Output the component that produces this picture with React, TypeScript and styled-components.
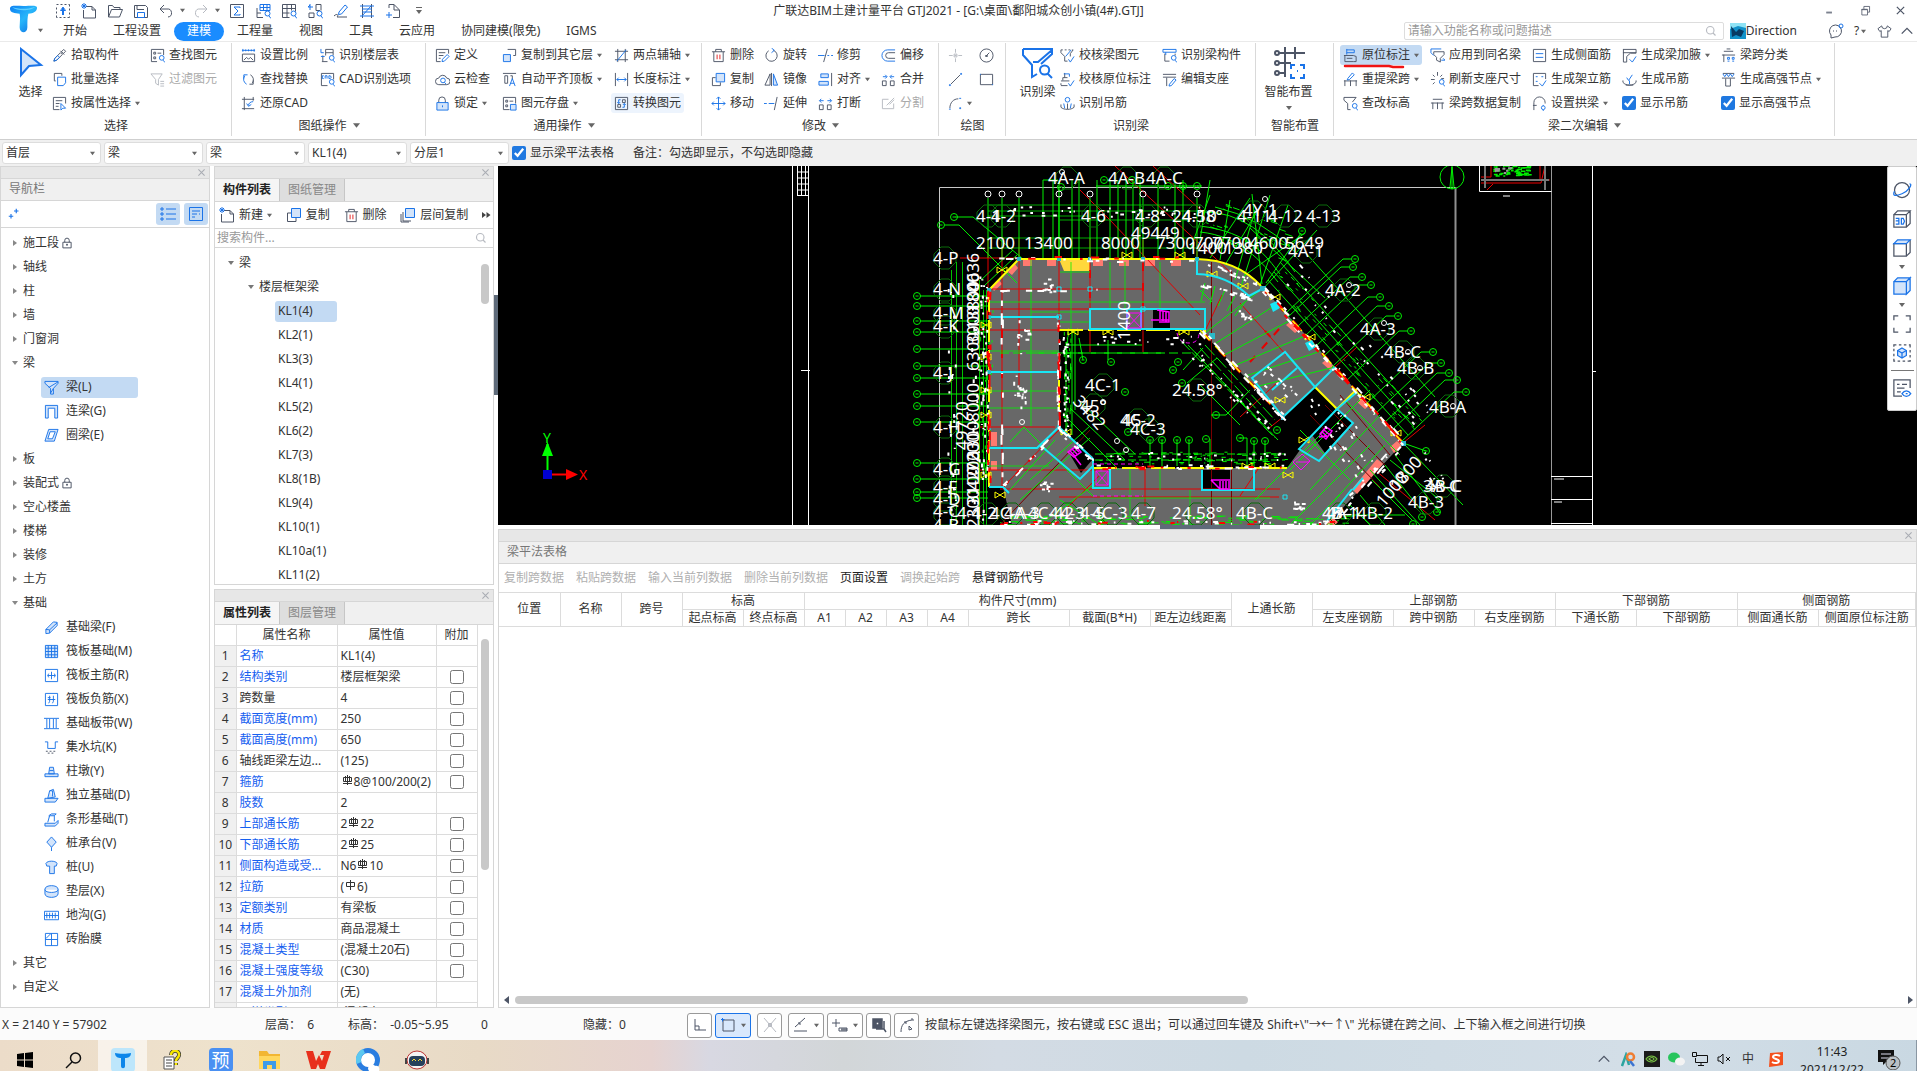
import React from "react";
import styled, { createGlobalStyle, css } from "styled-components";

const FONT = `"Noto Sans", "Noto Sans CJK SC", sans-serif`;
const INK = "#4d5566";
const BLUE = "#1a73e8";
const PALE = "#d3e4fa";
const LINE = "#d6d6d6";

const Global = createGlobalStyle`
  *, *::before, *::after { box-sizing: border-box; }
  body { margin: 0; overflow: hidden; background: #fff; }
  body, button, input, select, table {
    font-family: ${FONT};
    font-size: 12px;
    line-height: 16px;
    color: #333;
  }
  button { border: 0; padding: 0; margin: 0; background: none; white-space: nowrap; }
  svg { display: block; flex: none; }
`;

/* ---------- icons ---------- */

type Glyph = { g?: string; b?: string; f?: string; r?: string };

const MAG = "M10 10.5a2.5 2.5 0 1 0 5 0a2.5 2.5 0 1 0-5 0M14 13l2 2.5";

const glyphs: Record<string, Glyph> = {
  upload: { g: "M1.500 1.500h2m2 0h2m2 0h2m2 0h1v2m0 2v2m0 2v2m0 2v1h-2m-2 0h-2m-2 0h-2m-2 0h-1v-2m0-2v-2m0-2v-2", b: "M8 12V5M5.500 7.500L8 4l2.500 3.500zM7.500 5v7M8.500 5v7" },
  newdoc: { g: "M5 3.500h6l3.500 3.500v8h-12v-8M11 3.500v3.500h3.500", b: "M1 1l4 4M5 1L1 5M3 0v6M0 3h6" },
  open: { g: "M1.500 14V2.500h4l1.500 2h6v2M1.500 14l3-7.500h11l-3 7.500z" },
  save: { g: "M1.500 2.500h11l2 2v10h-13zM4 2.500v4h7", b: "M4.500 9.500h7v5h-7z" },
  undo: { g: "M6 2L2 6l4 4M2 6h7a4 4 0 0 1 1 8" },
  redo: { g: "M10 2l4 4-4 4M14 6H7a4 4 0 0 0-1 8" },
  sum: { g: "M1.500 1.500h13v13h-13z", b: "M11 5V4H5l4 4-4 4h6v-1" },
  calc: { g: "M2 5v9.500h6M2 10h4", b: "M5 1.500h10v6H5zM5 4.500h10M8.500 1.500v6M12 1.500v6" + MAG },
  tablefind: { g: "M1.500 1.500h13v7M1.500 1.500v13h7M1.500 5.500h13M1.500 10h7M6 1.500v13M10.500 1.500v6", b: MAG },
  swapfind: { g: "M9 1.500h5v6M2 10h5v4.500H2zM9 1.500v6h4", b: "M1 4h5M3 1v6M1 4l2-2" + MAG },
  sketch: { g: "M1 13c3-3 5-1 3 1h10", b: "M6 9l6-7 2.500 2-6 7-3 .5z" },
  ladder: { g: "M3.500 1v14M12.500 1v14", b: "M1 3h14M3 6h10M3 9h10M1 13h14M3 13l9-10" },
  addpage: { g: "M4 5V1.500h5L14.500 7v7.500H8M9 1.500V7h5", b: "M4 9v6M1 12h6" },
  dropper: { g: "M2 14l1-3 6-6 2 2-6 6zM9 3l4 4M10 4l2.500-2.500 2 2L12 6z", b: "M2 14l1-3 3-3 2 2-3 3z" },
  batch: { g: "M4 9.500H2.500v-8h8V4", b: "M6 5.500h8.500v6L12 14.500H6z" },
  props: { g: "M8 14.500H1.500v-13h13V8M4 5h7M4 8h4M4 11h3", b: "M9.500 8v7l2-2h3z" },
  findel: { g: "M1.500 1.500h13v6M1.500 1.500v13h6M4 4.500h2v2H4zM8 5.500h4M4 9.500h2v2H4z", b: MAG },
  filter: { g: "M1 2h12L9 8v6l-3-2V8zM11 10h4M11 12.500h4M11 15h4" },
  scale: { g: "M1.500 6.500h13v8h-13zM3 13l3-3 2 2 2-2 3 3", b: "M1 2.500h14M2 1v3M14 1v3M5 1.500v2M8 1.500v2M11 1.500v2" },
  floorfind: { g: "M6 8V1.500h8V8M2 14.500h6M3 8v6M6 5h8", b: "M1 1v4h3M1 9h4" + MAG },
  replace: { g: "M10 3a6 6 0 0 1 2 9M13 9v4h-4", b: "M6 13a6 6 0 0 1-2-9M3 7V3h4" },
  cadopt: { g: "M1.500 14.500v-13h13V8M1.500 14.500H8", b: "M4 4H2.500v3H4M5.500 7V4h2v3M9.500 4v3h1.500l1-1.500L11 4z" + MAG },
  restore: { g: "M3.500 1v14M1 3.500h13M13 1v4M1 13.500h13", b: "M13 6c-3 0-5 2-5 4M6 8l2 3 3-2" },
  define: { g: "M6 14.500H1.500v-13h13V6M4 5h7M4 8h5M4 11h2", b: "M8 12l5-5 2 2-5 5-2.500.5z" },
  cloud: { g: "M4 13.500a3.500 3.500 0 0 1 0-7 4.500 4.500 0 0 1 8.500 0 3.500 3.500 0 0 1 0 7z", b: "M6 9a2.500 2.500 0 1 0 5 0a2.500 2.500 0 1 0-5 0M10 11l2 2" },
  lock: { g: "M4 7V4.500a3.500 3.500 0 0 1 7 0V7", f: "M2 7h12v8H2z", b: "M8 10v2" },
  copyfloor: { g: "M6 1.500h8.500V8H12", f: "M1.500 7h7.500v7.500H1.500z" },
  aligntop: { g: "M1 1.500h14M3 4v8h3V4zM9 4h2v4", b: "M8 15l3-8 3 8M9 12h4" },
  store: { g: "M1.500 1.500h13V8M1.500 1.500v13H8M4 4.500h2v2H4zM8 5.500h4M4 9.500h2v2H4z", f: "M9 9h6v6H9z" },
  axis2: { g: "M4 1v14M12 1v14M1 3.500h14M1 12.500h14", b: "M3 14L13 2" },
  length: { g: "M1.500 1v14M14.500 1v14", b: "M3 8h10M5 6L3 8l2 2M11 6l2 2-2 2" },
  convert: { g: "M1.500 1.500h13v13h-13zM9 4h3v3H9zM4 9h3v3H4z", b: "M7 4H5v4M9 12h2V8M3.500 6.500L5 8l1.500-1.500M9.500 9.500L11 8l1.500 1.500" },
  trash: { g: "M1 4h14M5 4V1.500h6V4M3 4v10.500h10V4", r: "M6.500 7v5M9.500 7v5" },
  rotate: { g: "M10 2.500a6 6 0 1 1-5 0.500", b: "M8 0l3 2.500L8 5" },
  trim: { g: "M10 1L6 15", b: "M0 8h7M10 8h2M14 8h2" },
  offset: { g: "M15 5H8a3 3 0 0 0 0 6h7", b: "M15 2H7a6 6 0 0 0 0 12h8" },
  copy: { g: "M5 6H1.500v8.500H10V11", f: "M5.500 1.500h9v9h-9z" },
  mirror: { g: "M8 1v14M6.500 2L1 14h5.500z", f: "M10 2l4.500 12H10z" },
  align: { g: "M14.500 1v14", f: "M3 2h8v4H3zM1 10h10v4H1z" },
  merge: { g: "M1.500 9.500h4v5h-4zM10 9.500h4v5h-4z", b: "M2 5h4M4.500 3L6.500 5l-2 2M14 5h-4M11.500 3l-2 2 2 2" },
  move: { b: "M8 1v14M1 8h14M6 3l2-2 2 2M6 13l2 2 2-2M3 6L1 8l2 2M13 6l2 2-2 2" },
  extend: { g: "M14 1l-3 14", b: "M0 8h3M5 8h6" },
  breakup: { g: "M1.500 9.500h4v5h-4zM10 9.500h4v5h-4z", b: "M6 5H2M3.500 3l-2 2 2 2M10 5h4M12.500 3l2 2-2 2" },
  split: { g: "M8 3.500H1.500v10h12V8M6 10l8-8M9 9l5-5" },
  point: { g: "M8 1v4M8 11v4M1 8h4M11 8h4M6.500 6.500h3v3h-3zM7 8h2" },
  circle: { g: "M1 8a7 7 0 1 0 14 0a7 7 0 1 0-14 0M8 8l3-3M7 8h2v1H7z" },
  line: { g: "M3 13L13 3", b: "M1 14h2M2 13v2M13 2h2M14 1v2" },
  rect: { g: "M1.500 2.500h13v11h-13z", b: "M1 2.500h1M14 13.500h1" },
  arc: { g: "M2 13C2 7 6 3 11 3", b: "M1 14h2M12 2.500h2M12 13h2M13 12v2" },
  beamfind: { b: "M1 1h14.500v2.500L10 8.500M1 1v3L5.500 9v6L8 13.500M15.500 1.500L8.500 7.500H6M9.500 11.500a2.300 2.300 0 1 0 4.600 0a2.300 2.300 0 1 0-4.600 0M13.500 13.500l2 2" },
  checkbeam: { g: "M1 2h2m2 0h2m2 0h2m2 0h1l-3 4v3M1 2v3l4 4v5h3", b: "M6 9l6-7M9 12l2 3 4-6" },
  checkpos: { g: "M1 9.500h9M3 9V6h5M1 14.500h7M1 12v2M5 1v5", b: "M4 2h6v3M9 12l2 3 4-6" },
  hookfind: { g: "M1 9v3c3 3 11 3 14 0V9M8 8v6", b: "M5.500 4a2.500 2.500 0 1 0 5 0a2.500 2.500 0 1 0-5 0M4 8l1 5M12 8l-1 5" },
  membfind: { g: "M3 6v8h5M14 6v2", b: "M1 1.500h14v3H1zM4 4.500v3" + MAG },
  editseat: { g: "M1 2.500h14M1 5.500h14M5 6v9", b: "M8 13l5-6 2 1.500-5 6-2.500.5z" },
  smart: { g: "M3 3h13M3 8h6M3 13h3M6 0v15M11 0v6M1 3a1 1 0 1 0 2 0a1 1 0 1 0-2 0M1 8a1 1 0 1 0 2 0a1 1 0 1 0-2 0M1 13a1 1 0 1 0 2 0a1 1 0 1 0-2 0", b: "M9 11V9h2M13.500 9H15.500v2M15.500 13.500v2h-2M11 15.500H9v-2M12 12h.5" },
  inplace: { g: "M1 8h10M2 8v6.500h9l3 0V9l-3-1M4 11h6", b: "M4 1v6M4 2h8v3H4" },
  applybeam: { g: "M4 4h11v3l-4 4v4l-4-2v-3L4 7z", b: "M1 1h11M1 1v4l3 3M12 13h4M14 11l2 2" },
  sideb: { g: "M1.500 1.500h13v13h-13z", b: "M4 6h8M4 10h8" },
  haunch: { g: "M1 1.500h14v4h-6L5 9v6H1.500V1.500M1 5h14", b: "M8 12l3 3 4-6" },
  classify: { g: "M3 3.500h10M1 7.500h14M3 7v8M6 1h4", b: "M7 10h2v2H7zM12 10h2v2h-2zM7 14h2M12 14h2" },
  respan: { g: "M1 9.500h14M2 9v6M8 9v6M14 9v6", b: "M5 7l5-6 2 2-5 5-2.500.5z" },
  refresh: { g: "M8 0v4M1 8h4M3 3l2 2M13 3l-2 2M3 13l2-2M12 7h3", b: MAG },
  erect: { g: "M1.500 1.500h13v6M1.500 1.500v13H7", b: "M4 5h2M10 5h2M4 10h2M8 12l3 3 4-6" },
  hook: { g: "M1 9v2c3 4 11 4 14 0V9M4 14h8", b: "M5 6l2 3 4-6M8 9v4" },
  node: { g: "M1 6.500h14M5 7v8h5V7M2 1.500h12", b: "M2 2l2 3 2-3 2 3 2-3 2 3 2-3" },
  level: { g: "M1 1.500h13l-4 5M1 1.500v3L5 8v6.500h3", b: MAG },
  spancopy: { g: "M3 3.500h10M1 7.500h14M3 7v7M8 7v7M13 7v7" },
  arch: { g: "M2 15V7a6 6 0 0 1 12 0v1M1 10h4", b: "M10 12.500a2 2 0 1 0 4 0a2 2 0 1 0-4 0M12 9.500v1M12 15v1" },
  list: { b: "M1 2h2v2H1zM1 7h2v2H1zM1 12h2v2H1zM6 3h10M6 8h10M6 13h10" },
  card: { b: "M1.500 1.500h13v13h-13zM4 5h8M4 8h5M4 11h3M11 8h1" },
  plus: { b: "M11 1v6M8 4h6M4 8v6M1 11h6" },
  search: { g: "M2 7a5 5 0 1 0 10 0a5 5 0 1 0-10 0M11 11l3 3" },
  layers: { g: "M3 5v9h8M1 7v8h8", f: "M5.500 1.500h9v9h-9z" },
  beam: { f: "M1 1.500h14v2L10 9v6l-3 0V9L1 3.500z", b: "M5 8L15 2M7 14l3-5" },
  lintel: { f: "M1.500 15V1.500h13V15h-3V4.500h-7V15z" },
  ring: { f: "M5 1.500h10L11 14H1zM6.500 4h5.500L9 11.500H4z" },
  strip: { f: "M2 10L10 2l4 .5V6l-8 8-4 .5z", b: "M2 10l4 .5V14M6 10.500L14 3" },
  raft: { f: "M1.500 1.500h13v13h-13z", b: "M1.500 4.500h13M1.500 8h13M1.500 11.500h13M4.500 1.500v13M8 1.500v13M11.500 1.500v13" },
  mainbar: { b: "M1.500 1.500h13v13h-13zM4 8h8M8 4v8M5 6l-1 2 1 2M11 6l1 2-1 2" },
  negbar: { b: "M1.500 1.500h13v13h-13zM4 8h8M6 4v6l-1 2M10 4v6l-1 2M4 6h3" },
  band: { b: "M0 2.500h16M0 13.500h16M3 3v10M6 3v10M10 3v10M13 3v10" },
  sump: { b: "M1 2h3v7h8V2h3", g: "M2 12h2M6 12h2M10 12h2M4 14h2M8 14h2" },
  pier: { f: "M1 10.500h14v3H1zM5 10.500l1-7h4l1 7zM6 7h4" },
  iso: { f: "M1 11h14l-3 4H1zM4 11l2-8 4-1.500 2 8zM6 3h3v6" },
  isostrip: { f: "M1 12h11l3-3v3l-3 3H1zM4 11l2-7h5l2-2H8L5 4M11 4v6" },
  cap: { f: "M8 1l5 5.500L8 12 3 6.500z", b: "M8 12v4" },
  pile: { f: "M2 3.500c2-3 10-3 12 0l-1 3h-2v8H6v-8H3z" },
  cushion: { f: "M1 5.500c0-5 14-5 14 0v5c0 5-14 5-14 0zM1 6c0 4 14 4 14 0" },
  trench: { b: "M.5 3.500h15v9H.5zM3 5v6M6 5v6M9 5v6M12 5v6M1 8h14" },
  mold: { b: "M1.500 1.500h13v13h-13zM8 1.500v13M1.500 8h13M2 7l5-5" },
  orbit: { g: "M2 8a6 6 0 1 0 12 0a6 6 0 1 0-12 0", b: "M14 3c3 0-1 6-6 8s-8 2-6-2" },
  cube3: { g: "M1.500 4.500h10v10h-10zM1.500 4.500l3-3h10l-3 3M14.500 1.500v10l-3 3", b: "M3 7.500h2.500v4.500H3M3 9.500h2.500M7.500 7.500v4.500h1.500l1-2.200-1-2.300z" },
  cubetop: { g: "M1.500 4.500h10v10h-10zM14.500 1.500v10l-3 3", f: "M1.500 4.500l3-3h10l-3 3z" },
  cube: { f: "M1.500 4.500h10v10h-10zM1.500 4.500l3-3h10l-3 3M14.500 1.500v10l-3 3v-10z" },
  fit: { g: "M1.500 5V1.500H5M11 1.500h3.500V5M14.500 11v3.500H11M5 14.500H1.500V11" },
  isolate: { g: "M1.500 3v-1.500h2m2 0h2m2 0h2m2 0h1v2m0 2v2m0 2v2m0 2v1h-2m-2 0h-2m-2 0h-2m-2 0h-1v-2m0-2v-2m0-2v-2", f: "M8 4l3.500 2v4L8 12l-3.500-2V6z", b: "M4.500 6L8 8l3.500-2M8 8v4" },
  visible: { g: "M8 14.500H1.500v-13h13V8M4 5h2M8 5h4M4 8h6M4 11h3", b: "M8 12.500c2-3 5-3 7 0-2 3-5 3-7 0zM11 12.500h1.500" },
  ortho: { g: "M3 2v11h11M3 9h4v4" },
  snapbox: { g: "M3 3h11v11H3z", b: "M1 2.500h3.500M2.500 1v3.500" },
  cross: { g: "M2 1l12 14M14 1L2 15M6.500 6.500h3v3h-3z" },
  angle: { g: "M1 14h13M2 10L12 1M5 6h2v2" },
  plusminus: { g: "M4 2v8M0 6h8M7 11h8v3H7zM9 12h6M9 13h6" },
  window: { g: "M2 2h9v9H2zM3 3h7v7H3zM4 4h5v5H4zM5 5h3v3H5zM13 4v8H5M13 12l2 3" },
  polyarc: { g: "M2 15C2 8 5 4 13 3M5 5h2v2M12 2h2v2M10 9v4l3-1z" },
  chat: { g: "M3 12a6 6 0 1 1 4 2l-4 1zM5 8h1M8 8h1", b: "M11 3a2 2 0 1 0 4 0a2 2 0 1 0-4 0" },
  shirt: { g: "M5 2L1 5l2 3 1.500-1V14h7V7l1.500 1 2-3-4-3a3 3 0 0 1-6 0z" },
  up: { g: "M2 11l6-6 6 6" },
  min: { g: "M4 11h7M4 10h7" },
  rest: { g: "M3.500 6.500h7v7h-7zM6 6V3h7v7h-2M3 7h7" },
  x: { g: "M3.500 3.500l9 9M12.500 3.500l-9 9" },
  pointer: { f: "M3 1l10 8-6 .5-4 4.500z" },
  nlock: { g: "M5 7V4.500a3 3 0 0 1 6 0V7M2.500 7h11v7.500h-11zM8 9v3M7 10h2" },
};

const Icon = ({ n, s = 16, dim, w = 1 }: { n: string; s?: number; dim?: boolean; w?: number }) => {
  const p = glyphs[n];
  return (
    <svg width={s} height={s} viewBox="0 0 16 16" fill="none" strokeWidth={w} opacity={dim ? 0.4 : 1} aria-hidden>
      {p.g && <path d={p.g} stroke={INK} />}
      {p.f && <path d={p.f} stroke={BLUE} fill={PALE} fillRule="evenodd" />}
      {p.b && <path d={p.b} stroke={BLUE} />}
      {p.r && <path d={p.r} stroke="#e02020" />}
    </svg>
  );
};

const Caret = ({ s = 6, side, color = "#666" }: { s?: number; side?: boolean; color?: string }) => (
  <svg width={s} height={s} viewBox="0 0 6 6" aria-hidden>
    <path d={side ? "M1 0l4 3-4 3z" : "M0 1h6L3 5z"} fill={color} />
  </svg>
);

const LogoT = ({ s }: { s: number }) => (
  <svg width={s} height={s} viewBox="0 0 30 30" aria-hidden>
    <defs>
      <linearGradient id="tg" x1="0" y1="0" x2="1" y2="1">
        <stop offset="0" stopColor="#0d7ff2" />
        <stop offset=".5" stopColor="#27b6fa" />
        <stop offset="1" stopColor="#0a66e0" />
      </linearGradient>
    </defs>
    <path d="M1 5c0-4 5-3 14-3s14-1 14 2c0 4-4 6-9 6-1 4-1 8-1 14 0 7-8 7-8 0 0-5 1-9 0-14-5 0-10-1-10-5z" fill="url(#tg)" />
    <path d="M3 3c6 2 14 3 24 0-4 4-18 5-24 0z" fill="#5fd0ff" />
  </svg>
);

/* ---------- header ---------- */

const Page = styled.div`
  display: flex;
  flex-direction: column;
  height: 100vh;
  background: #fff;
`;

const Header = styled.header`
  display: grid;
  grid-template: 21px 20px / 50px minmax(0, 1fr);
  border-bottom: 1px solid #eaeaea;
`;

const LogoCell = styled.div`
  grid-area: 1 / 1 / 3 / 2;
  display: flex;
  align-items: flex-end;
  padding: 4px 2px 8px 9px;
`;

const TitleRow = styled.div`
  grid-area: 1 / 1 / 2 / 3;
  display: grid;
  grid-template-columns: 1fr auto 1fr;
  align-items: center;
`;

const QuickBar = styled.div`
  display: flex;
  align-items: center;
  padding-left: 50px;
`;

const QuickButton = styled.button<{ $wide?: boolean }>`
  display: flex;
  align-items: center;
  justify-content: center;
  gap: 6px;
  width: ${(p) => (p.$wide ? 35 : 26)}px;
`;

const Title = styled.h1`
  margin: 0;
  font-size: 12px;
  font-weight: 400;
  line-height: 20px;
`;

const WindowButtons = styled.div`
  display: flex;
  justify-content: flex-end;
`;

const IconButton = styled.button<{ $w: number }>`
  display: flex;
  align-items: center;
  justify-content: center;
  gap: 2px;
  width: ${(p) => p.$w}px;
  height: 20px;
`;

const TabRow = styled.div`
  grid-area: 2 / 2 / 3 / 3;
  display: flex;
  align-items: center;
`;

const Tab = styled.button<{ $on?: boolean }>`
  height: 19px;
  padding: 0 13px;
  border-radius: 10px;
  ${(p) => p.$on && css`background: #1a8cff; color: #fff;`}
`;

const SearchBox = styled.label`
  display: flex;
  align-items: center;
  width: 320px;
  height: 18px;
  margin: 0 6px 0 auto;
  padding: 0 6px 0 3px;
  border: 1px solid #ddd;
  border-radius: 2px;
`;

const PlainInput = styled.input`
  flex: 1;
  min-width: 0;
  padding: 0;
  border: 0;
  outline: 0;
  background: none;
  &::placeholder { color: #999; opacity: 1; }
`;

const User = styled.span`
  display: flex;
  align-items: center;
  margin-right: 27px;
`;

/* ---------- ribbon ---------- */

const Ribbon = styled.div`
  display: flex;
  height: 98px;
  padding-top: 1px;
  border-bottom: 1px solid #cfcfcf;
`;

const Group = styled.section`
  display: flex;
  flex-direction: column;
  height: 93px;
  padding-left: 9px;
  border-right: 1px solid #d9d9d9;
`;

const Tools = styled.div<{ $cols: string }>`
  display: grid;
  grid-template-rows: repeat(3, 24px);
  grid-template-columns: ${(p) => p.$cols};
  grid-auto-flow: column;
  align-items: center;
`;

const Tool = styled.button<{ $state?: string }>`
  position: relative;
  display: flex;
  align-items: center;
  gap: 4px;
  height: 20px;
  width: max-content;
  border-radius: 3px;
  ${(p) => p.$state === "dim" && css`color: #aaa;`}
  ${(p) => p.$state === "on" && css`background: #c3daf3; box-shadow: -3px 0 #c3daf3, 3px 0 #c3daf3;`}
  ${(p) => p.$state === "hover" && css`background: #edf4fd; box-shadow: -3px 0 #edf4fd, 3px 0 #edf4fd;`}
`;

const RedMark = styled.svg`
  position: absolute;
  left: 0;
  top: 18px;
`;

const ToolCheck = styled.label`
  display: flex;
  align-items: center;
  gap: 4px;
`;

const Check = styled.input`
  width: 14px;
  height: 14px;
  margin: 0;
  accent-color: #1f78e0;
`;

const BigTool = styled.button`
  grid-row: span 3;
  display: flex;
  flex-direction: column;
  align-items: center;
  gap: 5px;
  align-self: start;
  justify-self: center;
  padding-top: 4px;
`;

const GroupLabel = styled.div`
  display: flex;
  align-items: center;
  justify-content: center;
  gap: 6px;
  padding-right: 8px;
  height: 22px;
`;

type T = [icon: string, text: string, flag?: string] | null;

const GroupView = ({ cols, label, drop, big, items }: { cols: string; label: string; drop?: boolean; big?: T; items: T[] }) => (
  <Group>
    <Tools $cols={cols}>
      {big && (
        <BigTool>
          <Icon n={big[0]} s={32} />
          {big[1]}
          {big[2] && <Caret />}
        </BigTool>
      )}
      {items.map((t, i) => {
        if (!t) return <span key={i} />;
        const [icon, text, flag = ""] = t;
        if (icon === "check")
          return (
            <ToolCheck key={i}>
              <Check type="checkbox" defaultChecked />
              {text}
            </ToolCheck>
          );
        const state = ["dim", "on", "hover"].find((f) => flag.includes(f));
        return (
          <Tool key={i} $state={state} aria-label={text || icon}>
            <Icon n={icon} s={15} dim={state === "dim"} />
            {text}
            {(flag === "v" || flag === "v on") && <Caret s={5} />}
            {state === "on" && (
              <RedMark width="62" height="6" viewBox="0 0 62 6">
                <path d="M2 3h44l4 1h10" stroke="#f01414" strokeWidth="2.500" fill="none" strokeLinecap="round" />
              </RedMark>
            )}
          </Tool>
        );
      })}
    </Tools>
    <GroupLabel>
      {label}
      {drop && <Caret s={7} />}
    </GroupLabel>
  </Group>
);

/* ---------- selector strip ---------- */

const Strip = styled.div`
  display: flex;
  align-items: center;
  gap: 3px;
  height: 26px;
  padding-left: 2px;
  background: #f0f0f0;
`;

const SelectWrap = styled.span`
  display: grid;
  grid-template-columns: 1fr 10px;
  align-items: center;
  width: 99px;
  height: 22px;
  border: 1px solid #ddd;
  border-radius: 3px;
  background: #fff;
  > svg { grid-area: 1 / 2; pointer-events: none; }
`;

const Select = styled.select`
  grid-area: 1 / 1 / 2 / 3;
  appearance: none;
  width: 100%;
  height: 20px;
  padding: 0 3px;
  border: 0;
  background: none;
`;

const Note = styled.span`
  margin-left: 16px;
`;

/* ---------- docked panels ---------- */

const Work = styled.main`
  flex: 1;
  min-height: 0;
  display: grid;
  grid-template-columns: 210px 280px minmax(0, 1fr);
  column-gap: 4px;
`;

const Panel = styled.section<{ $inset?: number }>`
  display: flex;
  flex-direction: column;
  min-height: 0;
  min-width: 0;
  margin-left: ${(p) => p.$inset ?? 0}px;
  overflow: hidden;
  border: 1px solid ${LINE};
  background: #fff;
`;

const Grip = styled.div`
  display: flex;
  justify-content: flex-end;
  align-items: center;
  flex: none;
  height: 12px;
  padding-right: 2px;
  background: #e7e7e7;
  border-bottom: 1px solid ${LINE};
`;

const Caption = styled.h2`
  flex: none;
  margin: 0;
  padding: 0 8px;
  height: 22px;
  font-size: 12px;
  font-weight: 400;
  line-height: 20px;
  color: #777;
  background: #f0f0f0;
  border-bottom: 1px solid ${LINE};
`;

const NavTools = styled.div`
  display: flex;
  align-items: center;
  gap: 4px;
  flex: none;
  height: 27px;
  padding: 0 1px 0 7px;
  border-bottom: 1px solid ${LINE};
`;

const Toggle = styled.button<{ $push?: boolean }>`
  display: grid;
  place-items: center;
  width: 24px;
  height: 22px;
  border-radius: 3px;
  background: #c3daf3;
  margin-left: ${(p) => (p.$push ? "auto" : "0")};
`;

const Tree = styled.ul`
  margin: 0;
  padding: 3px 0 0;
  list-style: none;
`;

const TreeRow = styled.li<{ $indent: number }>`
  display: flex;
  align-items: center;
  gap: 5px;
  height: 24px;
  padding-left: ${(p) => p.$indent}px;
`;

const TreeText = styled.span`
  display: flex;
  align-items: center;
  gap: 2px;
`;

const Leaf = styled.button<{ $on?: boolean; $w: number }>`
  display: flex;
  align-items: center;
  gap: 7px;
  width: ${(p) => p.$w}px;
  height: 21px;
  padding: 0 3px;
  border-radius: 3px;
  background: ${(p) => (p.$on ? "#c3daf3" : "none")};
`;

const Middle = styled.div`
  display: grid;
  grid-template-rows: minmax(0, 1fr) minmax(0, 1fr);
  row-gap: 4px;
  min-height: 0;
`;

const TabStrip = styled.div`
  display: flex;
  flex: none;
  height: 23px;
  background: #f0f0f0;
  border-bottom: 1px solid ${LINE};
`;

const DockTab = styled.button<{ $on?: boolean }>`
  width: 65px;
  color: ${(p) => (p.$on ? "#222" : "#888")};
  font-weight: ${(p) => (p.$on ? 600 : 400)};
  background: ${(p) => (p.$on ? "#f5f5f5" : "#dedede")};
  border-right: 1px solid #c6c6c6;
`;

const ListTools = styled.div`
  display: flex;
  align-items: center;
  justify-content: space-between;
  flex: none;
  height: 27px;
  padding: 0 2px 0 4px;
  border-bottom: 1px solid ${LINE};
`;

const ListTool = styled.button`
  display: flex;
  align-items: center;
  gap: 4px;
`;

const ListSearch = styled.label`
  display: flex;
  align-items: center;
  flex: none;
  height: 19px;
  padding: 0 6px 0 2px;
  border-bottom: 1px solid ${LINE};
`;

const Scroller = styled.div`
  display: grid;
  grid-template-columns: minmax(0, 1fr) 12px;
  flex: 1;
  min-height: 0;
  overflow: hidden;
`;

const Thumb = styled.div<{ $top: number; $h: string }>`
  width: 8px;
  height: ${(p) => p.$h};
  margin-top: ${(p) => p.$top}px;
  border-radius: 4px;
  background: #c8c8c8;
`;

const PropTable = styled.table`
  width: 262px;
  table-layout: fixed;
  border-collapse: collapse;
  align-self: start;
  td, th {
    height: 21px;
    padding: 0 3px;
    border-right: 1px solid #dcdcdc;
    border-bottom: 1px solid #dcdcdc;
    font-weight: 400;
    white-space: nowrap;
    overflow: hidden;
  }
  thead th { height: 20px; }
  tbody th { padding: 0; background: #f0f0f0; text-align: center; }
  td:last-child { text-align: center; line-height: 0; }
`;

const PropName = styled.td<{ $blue: boolean }>`
  color: ${(p) => (p.$blue ? "#1660f0" : "#333")};
`;

const Rebar = styled.svg`
  display: inline-block;
  vertical-align: -1px;
  margin: 0 1px;
`;

const Bar = ({ plain }: { plain?: boolean }) => (
  <Rebar width="11" height="12" viewBox="0 0 11 12" fill="none" stroke="#333" aria-hidden>
    <path d={plain ? "M1.500 2.500h8v4h-8zM5.500 0v10" : "M1.500 2.500h8v4h-8zM5.500 0v10M3.500 1v6M7.500 1v6M1 8.500h9"} />
  </Rebar>
);

const props: [string, React.ReactNode, boolean, boolean][] = [
  ["名称", "KL1(4)", true, false],
  ["结构类别", "楼层框架梁", true, true],
  ["跨数量", "4", false, true],
  ["截面宽度(mm)", "250", true, true],
  ["截面高度(mm)", "650", true, true],
  ["轴线距梁左边...", "(125)", false, true],
  ["箍筋", <><Bar />8@100/200(2)</>, true, true],
  ["肢数", "2", true, false],
  ["上部通长筋", <>2<Bar />22</>, true, true],
  ["下部通长筋", <>2<Bar />25</>, true, true],
  ["侧面构造或受...", <>N6<Bar />10</>, true, true],
  ["拉筋", <>(<Bar plain />6)</>, true, true],
  ["定额类别", "有梁板", true, true],
  ["材质", "商品混凝土", true, true],
  ["混凝土类型", "(混凝土20石)", true, true],
  ["混凝土强度等级", "(C30)", true, true],
  ["混凝土外加剂", "(无)", true, false],
  ["泵送类型", "(混凝土泵)", true, false],
];

type Nav = [text: string, kind: "c" | "o" | "l" | "k", icon?: string];
const nav: Nav[] = [
  ["施工段", "k"], ["轴线", "c"], ["柱", "c"], ["墙", "c"], ["门窗洞", "c"], ["梁", "o"],
  ["梁(L)", "l", "beam"], ["连梁(G)", "l", "lintel"], ["圈梁(E)", "l", "ring"],
  ["板", "c"], ["装配式", "k"], ["空心楼盖", "c"], ["楼梯", "c"], ["装修", "c"], ["土方", "c"], ["基础", "o"],
  ["基础梁(F)", "l", "strip"], ["筏板基础(M)", "l", "raft"], ["筏板主筋(R)", "l", "mainbar"], ["筏板负筋(X)", "l", "negbar"],
  ["基础板带(W)", "l", "band"], ["集水坑(K)", "l", "sump"], ["柱墩(Y)", "l", "pier"], ["独立基础(D)", "l", "iso"],
  ["条形基础(T)", "l", "isostrip"], ["桩承台(V)", "l", "cap"], ["桩(U)", "l", "pile"], ["垫层(X)", "l", "cushion"],
  ["地沟(G)", "l", "trench"], ["砖胎膜", "l", "mold"], ["其它", "c"], ["自定义", "c"],
];

/* ---------- drawing area ---------- */

const Main = styled.div`
  display: grid;
  grid-template-rows: minmax(0, 359fr) 4px minmax(0, 480fr);
  grid-template-columns: minmax(0, 1fr);
  min-width: 0;
  min-height: 0;
  margin-left: -4px;
`;

const ViewRow = styled.div`
  display: grid;
  grid-template-columns: 4px minmax(0, 1fr);
  align-items: center;
  min-height: 0;
`;

const SideHandle = styled.button`
  display: grid;
  place-items: center;
  width: 4px;
  height: 100px;
  background: #5f6b7a;
`;

const BottomHandle = styled.button`
  justify-self: center;
  width: 100px;
  height: 4px;
  margin-left: 8px;
  background: #5f6b7a;
`;

const Canvas = styled.div`
  position: relative;
  height: 100%;
  overflow: hidden;
  background: #000;
`;

const ViewTools = styled.div`
  position: absolute;
  top: 0;
  right: 0;
  display: flex;
  flex-direction: column;
  align-items: center;
  gap: 9px;
  width: 30px;
  height: 245px;
  padding-top: 13px;
  border: 1px solid #ccc;
  border-radius: 2px;
  background: #fff;
`;

const ViewMore = styled.button`
  display: grid;
  place-items: center;
  width: 20px;
  height: 6px;
  margin: -3px 0;
`;

const Divider = styled.hr`
  width: 23px;
  height: 1px;
  margin: -2px 0;
  border: 0;
  background: #777;
`;

let seed = 7;
const rnd = () => {
  seed = (seed * 16807) % 2147483647;
  return seed / 2147483647;
};
const ticks = (x1: number, y1: number, x2: number, y2: number, n: number, spread: number, size = 4) => {
  const len = Math.hypot(x2 - x1, y2 - y1);
  const ux = (x2 - x1) / len;
  const uy = (y2 - y1) / len;
  let d = "";
  for (let i = 0; i < n; i++) {
    const t = rnd() * len;
    const o = (rnd() - 0.5) * spread;
    const s = 1 + rnd() * size;
    d += `M${(x1 + ux * t - uy * o).toFixed(1)} ${(y1 + uy * t + ux * o).toFixed(1)}l${(ux * s).toFixed(1)} ${(uy * s).toFixed(1)}`;
  }
  return d;
};

const G = "#00f000";
const DG = "#0a6a0a";

const labels: [string, number, number, number?][] = [
  ["4A-A", 1048, 184], ["4A-B", 1108, 184], ["4A-C", 1146, 184],
  ["4-1", 976, 222], ["4-2", 991, 222], ["4-6", 1081, 222], ["4-8", 1135, 222], ["24.58°", 1172, 222], ["4-10", 1182, 222],
  ["4-11", 1237, 222], ["4-12", 1268, 222], ["4-13", 1306, 222], ["4Y-1", 1243, 216],
  ["49449", 1131, 239], ["2100", 976, 249], ["13400", 1024, 249], ["8000", 1101, 249], ["7300", 1156, 249],
  ["1400", 1188, 254], ["700", 1194, 249], ["7700", 1212, 249], ["1380", 1224, 254], ["4600", 1249, 249], ["5649", 1285, 249],
  ["4A-1", 1288, 257], ["4A-2", 1325, 296], ["4A-3", 1360, 335], ["4B-C", 1384, 358], ["4B-B", 1397, 374], ["4B-A", 1429, 413],
  ["3A-C", 1423, 492], ["4B-C", 1425, 492], ["4B-3", 1408, 508], ["4B-C", 1236, 519], ["4B-1", 1322, 519], ["4A-1", 1326, 519], ["4B-2", 1357, 519],
  ["24.58°", 1172, 519], ["24.58°", 1172, 396], ["4C-1", 1085, 391], ["45°", 1080, 412], ["4C-2", 1120, 426], ["45", 1122, 426], ["4C-3", 1130, 435],
  ["4-P", 933, 264], ["4-N", 933, 295], ["4-M", 933, 319], ["4-K", 933, 332], ["4-J", 933, 379], ["4-H", 933, 433], ["4-G", 933, 475],
  ["4-F", 933, 493], ["4-D", 933, 505], ["4-C", 933, 517], ["4-B", 933, 531],
  ["4-1", 957, 519], ["4-2", 972, 519], ["4C-A", 990, 519], ["4A-3", 1004, 519], ["4C-4", 1028, 519], ["4-2", 1049, 519], ["4-3", 1060, 519], ["4-5", 1080, 519], ["4C-3", 1092, 519], ["4-7", 1131, 519],
  ["4636", 979, 292, -90], ["13800", 979, 330, -90], ["1800", 979, 312, -90], ["3000", 979, 345, -90], ["6300", 979, 371, -90], ["8000", 979, 422, -90], ["49720", 968, 450, -90],
  ["3300", 979, 460, -90], ["7200", 979, 472, -90], ["4200", 979, 490, -90], ["3100", 979, 505, -90], ["2300", 979, 528, -90], ["1400", 1130, 340, -90],
  ["3482", 1072, 402, 48], ["1000", 1384, 508, -50], ["1800", 1398, 492, -50],
];

const hexes = [
  [1067, 178], [1127, 178], [1164, 178], [988, 216], [1002, 216], [1093, 216], [1147, 216], [1197, 216], [1254, 212], [1285, 216], [1323, 216],
  [1306, 252], [1344, 290], [1378, 329], [1403, 352], [1415, 368], [1449, 406], [1443, 486], [1426, 503], [1255, 514], [1340, 514], [1375, 514],
  [1103, 385], [1094, 405], [1138, 420], [1150, 430], [1197, 390], [945, 258], [945, 290], [945, 314], [945, 327], [945, 373], [945, 427], [945, 469], [945, 487], [945, 500], [945, 514],
  [988, 514], [1012, 514], [1045, 514], [1068, 514], [1093, 514], [1112, 514], [1143, 514], [1197, 514],
];

const leftY = [296, 306, 321, 332, 349, 366, 378, 394, 406, 422, 463, 479, 492, 498];
const ne = [[1355, 259], [1353, 267], [1362, 277], [1371, 285], [1380, 297], [1389, 306], [1398, 316], [1411, 331], [1433, 352], [1441, 363], [1449, 373], [1457, 380], [1466, 392]];
const se = [[1426, 451], [1422, 517], [1437, 512], [1413, 524]];
const yard = [[1083, 360], [1111, 362], [1178, 362], [1173, 370], [1182, 383], [1125, 392], [1216, 415], [1206, 439], [1240, 438], [1254, 441], [1265, 441], [1277, 430], [1150, 440], [1162, 440], [1177, 440], [1189, 440], [1128, 432]];
const axisX = [988, 1002, 1019, 1059, 1090, 1143, 1197];

const neLines = ne
  .map(([x, y]) => {
    const t = (288 + 1.107 * (x - 10 - 1263) - y) / 1.477;
    return `M${x - 4} ${y}h-8l${(-0.72 * t).toFixed(0)} ${(0.68 * t).toFixed(0)}`;
  })
  .join("");

const wing = Array.from({ length: 6 }, (_, i) => {
  const t = i / 5;
  return `M${1205 + 50 * t} ${333 + 54 * t}L${1263 + 72 * t} ${288 + 79 * t}`;
}).join("");

const whites =
  ticks(985, 285, 985, 487, 50, 8, 3) + ticks(978, 270, 978, 520, 40, 12, 3) + ticks(952, 262, 952, 520, 36, 8, 3) +
  ticks(990, 260, 1197, 260, 16, 4, 7) + ticks(1000, 290, 1150, 290, 8, 3, 7) + ticks(988, 212, 1200, 212, 34, 10, 3) + ticks(1059, 320, 1059, 427, 24, 3, 6) + ticks(1066, 335, 1066, 430, 34, 5, 2) +
  ticks(1263, 288, 1403, 443, 50, 6, 7) + ticks(1290, 272, 1424, 420, 36, 26, 3) + ticks(1200, 330, 1283, 417, 30, 5, 8) + ticks(1190, 350, 1275, 435, 30, 10, 2) +
  ticks(1093, 467, 1285, 467, 24, 4, 6) + ticks(1110, 457, 1285, 457, 26, 8, 2) + ticks(1003, 487, 1050, 440, 10, 3, 8) + ticks(1000, 523, 1330, 523, 44, 4, 4) +
  ticks(1403, 443, 1327, 525, 34, 10, 5) + ticks(1050, 420, 1092, 460, 14, 6, 5) + ticks(1195, 283, 1250, 298, 20, 5, 5) + ticks(1002, 300, 1002, 480, 14, 2, 9) +
  ticks(1020, 310, 1020, 410, 12, 12, 3) + ticks(1320, 390, 1365, 480, 34, 34, 3) + ticks(1095, 340, 1200, 340, 18, 10, 3) + ticks(1200, 260, 1260, 285, 14, 4, 5) + ticks(1415, 450, 1440, 490, 10, 20, 3) +
  ticks(1255, 375, 1290, 405, 26, 30, 3) + ticks(1042, 285, 1055, 285, 10, 16, 3) + ticks(1015, 335, 1028, 335, 10, 12, 3) + ticks(1015, 392, 1028, 392, 10, 12, 3) + ticks(1040, 488, 1052, 488, 10, 12, 3) + ticks(1293, 508, 1305, 508, 10, 12, 3) + ticks(1238, 317, 1250, 317, 10, 12, 3);

const Drawing = () => (
  <svg width="1419" height="359" viewBox="498 166 1419 359" fill="none" role="img" aria-label="梁平面图">
    <g stroke="#fff">
      <path d="M792.500 166v359M808.500 166v359M797.500 166v30M801.500 166v30M805.500 166v30M797 172h11M797 178h11M797 184h11M797 190h11M797 195.500h11M801 370.500h9" />
      <path d="M939.500 525V187.500h516" stroke="#c8c8c8" />
      <path d="M1455.500 187v338" stroke="#909090" strokeWidth="2" />
      <path d="M1551.500 166v359" stroke="#999" />
      <path d="M1592.500 166v359M1551 476.500h41M1551 499.500h41M1551 523.500h41M1593 371.500h3M1554 479h10M1554 502h8M1503 196h7" />
      <path d="M1479.500 166v25.500h72" />
    </g>
    <path d="M1481 177h10v-11M1481 183h60l4-17M1487 190l6-6M1540 166v14h10" stroke="#e00" />
    <path d="M1481 180h68M1485 166v22M1545 166v24" stroke="#777" strokeWidth="2" />
    <path d={ticks(1492, 170, 1530, 170, 60, 12, 4)} stroke={G} strokeWidth="1.500" />
    <path d={ticks(1492, 170, 1510, 170, 10, 9, 5)} stroke="#999" strokeWidth="2" />

    <path
      d="M989 290L1019 259H1197Q1238 260 1263 288L1335 367L1403 443L1327 525H1012L1003 487H989ZM1059 330V427L1093 457V468H1287L1300 450L1337 409L1315 387L1283 417L1200 330Z"
      fill="#686868" fillRule="evenodd"
    />
    <path d="M1153 309h17v19h-17zM1202 470h28v20h-28zM1069 453l10-8 14 14-12 14zM1312 435l25-25 15 13-27 30z" fill="#000" />
    <path d="M1059 259h31v12h-26z" fill="#ffd83c" />
    <path d="M1023 260h9v6h-9zM1047 260h9v6h-9zM1093 260h10v6h-10zM1119 260h10v6h-10zM1145 260h10v6h-10zM1171 260h10v6h-10zM991 432h6v14h-6zM991 461h6v9h-6zM1008 272l7-8 3 4-6 7zM991 287l8-7 3 4-8 7zM1286 325l5-4 8 9-4 3zM1322 363l5-4 8 9-4 3zM1357 402l5-4 7 8-4 3zM1390 447l7-6 5 5-8 7zM1352 489l25-30 6 5-26 30zM1326 525l6-8 6 5-3 3z" fill="#ff7a70" />

    <g stroke="#e60000">
      {axisX.map((x, i) => (
        <path key={x} d={`M${x} 238V${[300, 487, 385, 330, 352, 352, 262][i]}`} />
      ))}
      <path d="M960 258h60M989 289h155M989 309h101M975 330h84M980 427h75M980 470h120M1000 489h280M1059 497h220M1080 190l30 30 90 95M1115 166l85 78 30 28M1153 166l50 46M1003 487l56-57M1060 515l40-40M1145 466v40M1280 380l-40 37M1335 367l22-20M1403 443l22-18M1283 417l-15 12M1375 470l60 50M1260 466l-20 30" />
      <path d="M1240 303l32 36 14 16M1222 295l-16 34" />
      <path d="M1002 330v80M1143 263v50M1090 270v35" strokeWidth="2" strokeDasharray="8 12" />
      <path d="M1204 334l78 82M1263 288l140 155" strokeWidth="3" strokeDasharray="9 13" />
      <path d="M1003 487l40-40M1250 362l30-34M1265 331l12 13" strokeWidth="2" strokeDasharray="8 10" />
    </g>
    <path d="M1211.500 262v263M1231.500 270v255M1000 525l90-95M1310 415l70 72M1325 405l60 60M1340 395l50 60" stroke="#780000" />

    <g stroke={G}>
      <path d="M1031 260v166M1071 262v68M1110 262v47M1125 262v47M1160 262v47M989 302h216M1031 312h60M989 351h70M989 391h70M989 408h70M1060 272h30M1060 322h30M989 466h60M1130 470v50M1160 470v20M1190 490v35M1100 498h170" opacity=".8" />
      <path d="M1010 442l14-15 70 70M1030 480l60-54M1040 525l60-45M1064 415l55 55M1070 408l55 52M1080 402l55 52M1055 440l-45 50M1020 500l70-62M1060 500l40 25" />
      <path d={wing} />
      <path d="M1200 290l12 12M1205 283l-4 18M1215 286l-5 18M1225 290l-7 16M1235 296l-8 15M1245 302l-10 14M1300 430l50 50M1290 470l80-80M1310 490l70-75M1330 505l55-60M1265 490l60-60M1290 525l80-80M1345 400l55 55M1255 500l30-30M1310 525l30-30" />
      <path d="M1035 353h130M1000 353h195" strokeDasharray="9 4" />
      <path d="M1066 345h76M1066 342v90M1072 330v105M1075 330v80" />
      <path d="M1095 460h190M1095 454h190" strokeDasharray="8 3" />
      <path d="M988 205h213M988 211h213M988 238h213M988 248h213M988 216h100M1060 220h130" opacity=".7" />
      {[1043, 1053, 1059, 1072, 1079, 1097, 1110, 1118, 1126, 1133, 1140, 1158, 1175, 1183].map((x) => (
        <path key={x} d={`M${x} 180V258`} />
      ))}
      <path d="M1043 180h15M1096 186h100M1197 186h5M1183 186v6" />
      {axisX.map((x) => <path key={x} d={`M${x} 198V258`} />)}
      {leftY.map((y) => <path key={y} d={`M920 ${y}h68`} />)}
      <path d="M951.500 270V525M956.500 262V525M962.500 262V525M979.500 280V525M983.500 290V525M986.500 290V525" opacity=".8" />
      <path d="M945 225h14l58 58M955 217h18l50 42M985 285l32-30M981 280l32-30" />
      <path d={neLines} />
      <path d="M1268 280l140 155M1274 272l140 155M1280 262l140 155M1305 252l130 145M1250 228l75 70M1200 232c40 4 62 30 78 50M1200 226c50 6 66 30 80 48M1205 212q50 0 90 60M1215 207q45 10 80 45" />
      <path d="M1240 290l30-95M1235 280l20-70M1266 283l35-50M1262 290l55-60M1200 240l10-60M1190 250l20-55M1262 284l-10-90M1220 260l10-60M1245 275l60-42M1260 285l28-80M1225 265l36-60M1210 258l40-60" />
      <path d="M1403 443l60 62M1395 455l45 58M1385 465l40 50M1372 480l40 40M1360 495l25 30M1403 443l23 8M1390 460l50 40M1350 505l20 20M1345 515h60M1370 470l50 55" />
      <path d="M1205 345l70 75M1200 348l72 78M1195 352l72 78M1188 345l90 95M1180 340l95 98" strokeDasharray="14 3" />
      <path d="M1211 415l15 0 24-25M1210 439v28M1240 438h7v30M1254 441v26M1265 441v26M1150 440v26M1162 440v26M1177 440v26M1189 440v26M1183 370l20-22M1187 383l30-25M1083 360l-4-22M1108 360v-20M1240 425l-40-40" />
      <path d={ticks(985, 485, 985, 300, 60, 16, 5)} />
      <path d={ticks(1000, 521, 1350, 521, 160, 10, 8)} />
      <path d={ticks(1275, 272, 1415, 427, 90, 22, 5)} />
      <path d={ticks(1095, 458, 1285, 458, 70, 12, 5)} />
      <path d={ticks(1205, 215, 1290, 245, 40, 40, 7)} />
      <path d={ticks(1068, 330, 1068, 430, 40, 8, 6)} />
      <circle cx="1452" cy="177" r="12" />
      <path d="M1452 166v23l-2-2 2-20 2 20-2 2" />
      {[...leftY.map((y) => [917, y]), ...ne, ...se, ...yard, [941, 225], [954, 217], [1061, 187], [1104, 180], [1132, 180], [1168, 186], [1183, 186], [1197, 186], [1302, 231]].map(([x, y], i) => (
        <g key={i}>
          <circle cx={x} cy={y} r="3.500" />
          <path d={`M${x - 1.5} ${y}h3`} />
        </g>
      ))}
    </g>
    <g stroke={DG}>
      {hexes.map(([x, y], i) => (
        <path key={i} d={`M${x - 11} ${y - 4}l7-7h8l7 7v8l-7 7h-8l-7-7z`} />
      ))}
    </g>

    <g stroke="#ff0">
      <path d="M989 290l30-31h178q40 1 64 27" strokeWidth="2" />
      <path d="M989 290v197" strokeWidth="2" strokeDasharray="22 8" />
      <path d="M1059 330h145M1093 468h194" strokeWidth="2" strokeDasharray="24 5" />
      <path d="M1263 288l140 155M1200 330l83 87" strokeWidth="1.500" strokeDasharray="14 8" />
      <path d="M1315 387l22 22 20-20M1205 310v22M1090 312v16M1059 380v30" strokeWidth="2" />
      {[[1002, 270], [1127, 255], [1180, 255], [1073, 332], [1108, 332], [1184, 332], [1212, 274], [1243, 286], [1275, 297], [1310, 337], [1247, 466], [1270, 466], [1000, 495], [1365, 397], [1396, 433], [1304, 440], [1066, 432], [986, 325], [986, 357], [986, 390], [986, 415], [986, 475], [1280, 400], [1288, 475]].map(([x, y], i) => (
        <path key={i} d={`M${x - 5} ${y - 3}v6l5-3 5 3v-6l-5 3z`} />
      ))}
    </g>
    <g stroke="#19e6f5" strokeWidth="2">
      <path d="M989 317h70M989 372h70M989 448h48l22-21M1059 427l34 32v10M1040 445l40 34 13-13M1090 309h115v20h-115zM1127 309v20M1141 309v20M1093 468v20h17v-20M1202 470v20h52v-22M1197 259v15q30 1 52 22l15-8M1252 378l33-26 30 35-32 30zM1272 390l25-22M1335 367l-20 20M1337 409l16 14-34 38-20-12zM1337 409l20-17M989 487h14l6 6M1352 489l-25 32M1363 478l-10 12" />
      <path d="M1057 287h4v4h-4zM1088 287h4v4h-4zM1283 495h4v4h-4zM1057 315h4v4h-4zM1141 307h4v4h-4z" strokeWidth="1" />
    </g>
    <path d="M1270 304l7-3 3 7-7 4zM1305 343l7-3 4 7-7 4z" fill="#19e6f5" />
    <path d="M1017 257h4v4h-4zM1057 257h4v4h-4zM1088 257h4v4h-4zM1141 257h4v4h-4zM1195 257h4v4h-4zM987 288h4v4h-4zM987 315h4v4h-4zM987 370h4v4h-4zM987 426h4v4h-4zM1057 425h4v4h-4zM1260 286h6v5h-6zM1401 441h5v5h-5zM1281 415h4v5h-4zM1209 333h6v6h-6z" fill="#2ab8c8" />
    <g stroke="#ff00ff">
      <path d="M1127 313h14v15h-14zM1127 313l14 15M1141 313l-14 15M1096 471h12v14h-12zM1096 471l12 14M1108 471l-12 14M1302 454l8 7-9 9-8-8zM1296 462h13" />
      <path d="M1151 320h18M1157 310l12 2v10h-10M1160 311v8M1163 311v10M1166 312v10M1211 480h19M1211 480l9 9h8M1220 481v8M1223 481v8M1226 481v9M1229 481v9M1068 452l8-6 5 6-7 5zM1070 451l5 5M1072 449l5 5M1074 447l5 5M1074 456l7 9M1320 434l6-7 6 4-6 8zM1322 432l6 5M1324 430l6 5M1319 437l8-1" strokeWidth="1.500" />
      <path d="M1093 464h50M1093 496h50M1177 333q2 10 12 10t10-10" strokeDasharray="4 3" />
    </g>
    <path d={whites} stroke="#fff" strokeWidth="2" />
    <path d={ticks(989, 290, 989, 480, 34, 3, 8) + ticks(1260, 286, 1400, 440, 26, 3, 8) + ticks(1059, 320, 1059, 420, 12, 2, 9) + ticks(1093, 468, 1280, 468, 12, 3, 8) + ticks(1000, 523, 1350, 523, 20, 4, 6) + ticks(1020, 258, 1190, 258, 8, 2, 8)} stroke="#f00" strokeWidth="2" />
    <g stroke="#fff">
      {axisX.map((x) => <circle key={x} cx={x} cy="194" r="3" />)}
      {[[1062, 172], [1265, 199], [1349, 285], [1384, 323], [1408, 352], [1420, 368], [1453, 406], [1022, 422], [1117, 441], [1126, 450], [1103, 402]].map(([x, y], i) => <circle key={i} cx={x} cy={y} r="2.500" />)}
    </g>
    <g fill="#fff" fontFamily={FONT} fontSize="17">
      {labels.map(([t, x, y, a], i) => (
        <text key={i} x={x} y={y} transform={a ? `rotate(${a} ${x} ${y})` : undefined}>{t}</text>
      ))}
    </g>

    <path d="M547.500 470v-26" stroke="#00ff00" strokeWidth="2" />
    <path d="M542 456l5.500-14 5.500 14z" fill="#00ff00" />
    <path d="M550 474.500h20" stroke="#ff0000" strokeWidth="2" />
    <path d="M566 469l12 5.500-12 5.500z" fill="#ff0000" />
    <path d="M543 470h9v9h-9z" fill="#0000d0" />
    <g fontFamily={FONT} fontSize="14">
      <text x="543" y="443" fill="#00ff00">Y</text>
      <text x="579" y="480" fill="#ff0000">X</text>
    </g>
  </svg>
);

/* ---------- span table ---------- */

const Commands = styled.div`
  display: flex;
  align-items: center;
  gap: 12px;
  flex: none;
  height: 28px;
  padding-left: 5px;
`;

const Command = styled.button`
  color: #222;
  &:disabled { color: #b0b0b0; }
`;

const SpanTable = styled.table`
  width: 100%;
  flex: none;
  table-layout: fixed;
  border-collapse: collapse;
  th {
    height: 17px;
    padding: 0;
    border: 1px solid #dcdcdc;
    font-weight: 400;
    white-space: nowrap;
    overflow: hidden;
  }
  th:first-child { border-left: 0; }
`;

const Fill = styled.div`
  flex: 1;
`;

const HScroll = styled.div`
  display: flex;
  align-items: center;
  gap: 6px;
  flex: none;
  height: 14px;
  padding: 0 3px 0 5px;
`;

const HThumb = styled.div`
  width: 52%;
  height: 8px;
  margin-right: auto;
  border-radius: 4px;
  background: #c8c8c8;
`;

/* ---------- status and taskbar ---------- */

const Status = styled.footer`
  display: grid;
  grid-template-columns: 263px 83px 133px 102px 104px auto minmax(0, 1fr);
  align-items: center;
  flex: none;
  height: 32px;
  padding: 2px 0 0 2px;
  background: #fbfbfb;
  white-space: pre;
`;

const Snaps = styled.div`
  display: flex;
  gap: 3px;
  margin-right: 6px;
`;

const Snap = styled.button<{ $on?: boolean; $wide?: boolean; $gap?: boolean }>`
  display: flex;
  align-items: center;
  justify-content: center;
  gap: 5px;
  width: ${(p) => (p.$wide ? 36 : 25)}px;
  height: 25px;
  margin-right: ${(p) => (p.$gap ? 3 : 0)}px;
  border: 1px solid ${(p) => (p.$on ? BLUE : "#999")};
  border-radius: 3px;
  background: ${(p) => (p.$on ? "#d9e8fc" : "#fff")};
`;

const Taskbar = styled.nav`
  display: flex;
  flex: none;
  height: 31px;
  overflow: hidden;
  background: linear-gradient(90deg, #ecdcc9 0, #eee2cc 12%, #e8dac6 25%, #e6d3d0 34%, #d8d8e2 37%, #d2d6d8 44%, #d3dbe4 52%, #cddae3 65%, #d3dee7 85%, #c9d8e2 100%);
`;

const TaskApp = styled.button<{ $on?: boolean }>`
  display: flex;
  align-items: center;
  justify-content: center;
  width: 49px;
  height: 40px;
  background: ${(p) => (p.$on ? "rgba(255,255,255,.6)" : "none")};
`;

const Tray = styled.div`
  display: flex;
  align-items: center;
  height: 38px;
  margin-left: auto;
  padding-right: 8px;
  border-right: 1px solid #8a97a3;
`;

const TrayItem = styled.button<{ $w?: number }>`
  display: grid;
  place-items: center;
  width: ${(p) => p.$w ?? 24}px;
`;

const Clock = styled.time`
  display: block;
  width: 80px;
  padding-top: 4px;
  line-height: 18px;
  text-align: center;
  color: #222;
`;

const YuTile = styled.span`
  display: grid;
  place-items: center;
  width: 24px;
  height: 24px;
  border-radius: 4px;
  background: #4a90f2;
  color: #fff;
  font-size: 18px;
  line-height: 24px;
`;

const spanHead: [string, number][] = [["标高", 2], ["构件尺寸(mm)", 7], ["上通长筋", 0], ["上部钢筋", 3], ["下部钢筋", 2], ["侧面钢筋", 2]];
const spanCols = [61, 61, 61, 61, 61, 41, 41, 41, 41, 101, 81, 81, 81, 81, 81, 81, 81, 101, 81];

export default function App() {
  return (
    <Page>
      <Global />
      <Header>
        <TitleRow>
          <QuickBar>
            {["upload", "newdoc", "open", "save", "undo", "redo", "sum", "calc", "tablefind", "swapfind", "sketch", "ladder", "addpage"].map((n) => {
              const wide = n === "undo" || n === "redo";
              return (
                <QuickButton key={n} $wide={wide} aria-label={n}>
                  <Icon n={n} dim={n === "redo"} />
                  {wide && <Caret s={5} />}
                </QuickButton>
              );
            })}
            <QuickButton aria-label="more">
              <svg width="6" height="8" viewBox="0 0 6 8"><path d="M0 0h6v1H0zM0 3h6L3 7z" fill="#666" /></svg>
            </QuickButton>
          </QuickBar>
          <Title>广联达BIM土建计量平台 GTJ2021 - [G:\桌面\鄱阳城众创小镇(4#).GTJ]</Title>
          <WindowButtons>
            <IconButton $w={36} aria-label="最小化"><Icon n="min" s={13} /></IconButton>
            <IconButton $w={36} aria-label="还原"><Icon n="rest" s={13} /></IconButton>
            <IconButton $w={34} aria-label="关闭"><Icon n="x" s={13} w={1.5} /></IconButton>
          </WindowButtons>
        </TitleRow>
        <LogoCell>
          <LogoT s={29} />
          <Caret s={5} />
        </LogoCell>
        <TabRow>
          {["开始", "工程设置", "建模", "工程量", "视图", "工具", "云应用", "协同建模(限免)", "IGMS"].map((t) => (
            <Tab key={t} $on={t === "建模"}>{t}</Tab>
          ))}
          <SearchBox>
            <PlainInput placeholder="请输入功能名称或问题描述" aria-label="搜索功能" />
            <Icon n="search" s={12} dim w={1.5} />
          </SearchBox>
          <User>
            <svg width="16" height="16" viewBox="0 0 16 16" aria-hidden>
              <rect width="16" height="16" fill="#1291c9" />
              <path d="M0 0h16v5L8 3 0 6z" fill="#8fe3f5" />
              <path d="M1 3l5 6 3-3 5 2-3 6-5-2-4 2z" fill="#073a63" />
            </svg>
            Direction
          </User>
          <IconButton $w={24} aria-label="消息"><Icon n="chat" /></IconButton>
          <IconButton $w={24}>?<Caret s={5} /></IconButton>
          <IconButton $w={24} aria-label="皮肤"><Icon n="shirt" s={15} /></IconButton>
          <IconButton $w={21} aria-label="收起"><Icon n="up" s={14} w={1.5} /></IconButton>
        </TabRow>
      </Header>

      <Ribbon>
        <GroupView cols="43px 98px 81px" label="选择" big={["pointer", "选择"]}
          items={[["dropper", "拾取构件"], ["batch", "批量选择"], ["props", "按属性选择", "v"], ["findel", "查找图元"], ["filter", "过滤图元", "dim"], null]} />
        <GroupView cols="79px 105px" label="图纸操作" drop
          items={[["scale", "设置比例"], ["replace", "查找替换"], ["restore", "还原CAD"], ["floorfind", "识别楼层表"], ["cadopt", "CAD识别选项"], null]} />
        <GroupView cols="67px 112px 87px" label="通用操作" drop
          items={[["define", "定义"], ["cloud", "云检查"], ["lock", "锁定", "v"], ["copyfloor", "复制到其它层", "v"], ["aligntop", "自动平齐顶板", "v"], ["store", "图元存盘", "v"], ["axis2", "两点辅轴", "v"], ["length", "长度标注", "v"], ["convert", "转换图元", "hover"]]} />
        <GroupView cols="53px 54px 63px 57px" label="修改" drop
          items={[["trash", "删除"], ["copy", "复制"], ["move", "移动"], ["rotate", "旋转"], ["mirror", "镜像"], ["extend", "延伸"], ["trim", "修剪"], ["align", "对齐", "v"], ["breakup", "打断"], ["offset", "偏移"], ["merge", "合并"], ["split", "分割", "dim"]]} />
        <GroupView cols="31px 26px" label="绘图"
          items={[["point", "", "dim"], ["line", ""], ["arc", "", "v"], ["circle", ""], ["rect", ""], null]} />
        <GroupView cols="45px 102px 93px" label="识别梁" big={["beamfind", "识别梁"]}
          items={[["checkbeam", "校核梁图元"], ["checkpos", "校核原位标注"], ["hookfind", "识别吊筋"], ["membfind", "识别梁构件"], ["editseat", "编辑支座"], null]} />
        <GroupView cols="47px 21px" label="智能布置" big={["smart", "智能布置", "v"]} items={[]} />
        <GroupView cols="87px 102px 90px 99px 113px" label="梁二次编辑" drop
          items={[["inplace", "原位标注", "v on"], ["respan", "重提梁跨", "v"], ["level", "查改标高"], ["applybeam", "应用到同名梁"], ["refresh", "刷新支座尺寸"], ["spancopy", "梁跨数据复制"], ["sideb", "生成侧面筋"], ["erect", "生成架立筋"], ["arch", "设置拱梁", "v"], ["haunch", "生成梁加腋", "v"], ["hook", "生成吊筋"], ["check", "显示吊筋"], ["classify", "梁跨分类"], ["node", "生成高强节点", "v"], ["check", "显示高强节点"]]} />
      </Ribbon>

      <Strip>
        {["首层", "梁", "梁", "KL1(4)", "分层1"].map((t, i) => (
          <SelectWrap key={i}>
            <Select aria-label={`选择${i + 1}`}><option>{t}</option></Select>
            <Caret s={5} />
          </SelectWrap>
        ))}
        <ToolCheck>
          <Check type="checkbox" defaultChecked />
          显示梁平法表格
        </ToolCheck>
        <Note>备注：勾选即显示，不勾选即隐藏</Note>
      </Strip>

      <Work>
        <Panel>
          <Grip><Icon n="x" s={11} dim w={1.5} /></Grip>
          <Caption>导航栏</Caption>
          <NavTools>
            <Icon n="plus" s={12} w={1.5} />
            <Toggle $push aria-label="列表"><Icon n="list" /></Toggle>
            <Toggle aria-label="卡片"><Icon n="card" /></Toggle>
          </NavTools>
          <Tree>
            {nav.map(([t, k, icon]) =>
              k === "l" ? (
                <TreeRow key={t} $indent={40}>
                  <Leaf $w={97} $on={t === "梁(L)"}>
                    <Icon n={icon!} s={15} />
                    {t}
                  </Leaf>
                </TreeRow>
              ) : (
                <TreeRow key={t} $indent={11}>
                  <Caret side={k !== "o"} color="#888" />
                  <TreeText>
                    {t}
                    {k === "k" && <Icon n="nlock" s={12} w={1.3} />}
                  </TreeText>
                </TreeRow>
              )
            )}
          </Tree>
        </Panel>

        <Middle>
          <Panel>
            <Grip><Icon n="x" s={11} dim w={1.5} /></Grip>
            <TabStrip>
              <DockTab $on>构件列表</DockTab>
              <DockTab>图纸管理</DockTab>
            </TabStrip>
            <ListTools>
              <ListTool><Icon n="newdoc" />新建 <Caret s={5} /></ListTool>
              <ListTool><Icon n="copy" />复制</ListTool>
              <ListTool><Icon n="trash" s={15} />删除</ListTool>
              <ListTool><Icon n="layers" />层间复制</ListTool>
              <ListTool aria-label="更多"><svg width="9" height="6" viewBox="0 0 9 6"><path d="M0 0l4 3-4 3zM4.500 0l4 3-4 3z" fill="#444" /></svg></ListTool>
            </ListTools>
            <ListSearch>
              <PlainInput placeholder="搜索构件..." aria-label="搜索构件" />
              <Icon n="search" s={12} dim w={1.5} />
            </ListSearch>
            <Scroller>
              <Tree>
                <TreeRow $indent={13}><Caret color="#777" /><TreeText>梁</TreeText></TreeRow>
                <TreeRow $indent={33}><Caret color="#777" /><TreeText>楼层框架梁</TreeText></TreeRow>
                {["KL1(4)", "KL2(1)", "KL3(3)", "KL4(1)", "KL5(2)", "KL6(2)", "KL7(3)", "KL8(1B)", "KL9(4)", "KL10(1)", "KL10a(1)", "KL11(2)"].map((t, i) => (
                  <TreeRow key={t} $indent={60}><Leaf $w={62} $on={i === 0}>{t}</Leaf></TreeRow>
                ))}
              </Tree>
              <Thumb $top={16} $h="40px" />
            </Scroller>
          </Panel>

          <Panel>
            <Grip><Icon n="x" s={11} dim w={1.5} /></Grip>
            <TabStrip>
              <DockTab $on>属性列表</DockTab>
              <DockTab>图层管理</DockTab>
            </TabStrip>
            <Scroller>
              <PropTable>
                <colgroup><col width="21" /><col width="101" /><col width="99" /><col width="41" /></colgroup>
                <thead><tr><th /><th>属性名称</th><th>属性值</th><th>附加</th></tr></thead>
                <tbody>
                  {props.map(([name, value, blue, box], i) => (
                    <tr key={name}>
                      <th>{i + 1}</th>
                      <PropName $blue={blue}>{name}</PropName>
                      <td>{value}</td>
                      <td>{box && <Check type="checkbox" aria-label={name} />}</td>
                    </tr>
                  ))}
                </tbody>
              </PropTable>
              <Thumb $top={14} $h="58%" />
            </Scroller>
          </Panel>
        </Middle>

        <Main>
          <ViewRow>
            <SideHandle aria-label="折叠面板" />
            <Canvas>
              <Drawing />
              <ViewTools>
                <Icon n="orbit" s={20} />
                <Icon n="cube3" s={20} />
                <Icon n="cubetop" s={20} />
                <ViewMore aria-label="视角"><Caret /></ViewMore>
                <Icon n="cube" s={20} />
                <ViewMore aria-label="显示方式"><Caret /></ViewMore>
                <Icon n="fit" s={20} />
                <Icon n="isolate" s={20} />
                <Divider />
                <Icon n="visible" s={20} />
              </ViewTools>
            </Canvas>
          </ViewRow>
          <BottomHandle aria-label="折叠表格" />
          <Panel $inset={4}>
            <Grip><Icon n="x" s={11} dim w={1.5} /></Grip>
            <Caption>梁平法表格</Caption>
            <Commands>
              <Command disabled>复制跨数据</Command>
              <Command disabled>粘贴跨数据</Command>
              <Command disabled>输入当前列数据</Command>
              <Command disabled>删除当前列数据</Command>
              <Command>页面设置</Command>
              <Command disabled>调换起始跨</Command>
              <Command>悬臂钢筋代号</Command>
            </Commands>
            <SpanTable>
              <colgroup>{spanCols.map((w, i) => <col key={i} width={w} />)}<col /></colgroup>
              <thead>
                <tr>
                  <th rowSpan={2}>位置</th><th rowSpan={2}>名称</th><th rowSpan={2}>跨号</th>
                  {spanHead.map(([t, n]) => (n ? <th key={t} colSpan={n}>{t}</th> : <th key={t} rowSpan={2}>{t}</th>))}
                </tr>
                <tr>
                  {["起点标高", "终点标高", "A1", "A2", "A3", "A4", "跨长", "截面(B*H)", "距左边线距离", "左支座钢筋", "跨中钢筋", "右支座钢筋", "下通长筋", "下部钢筋", "侧面通长筋", "侧面原位标注筋"].map((t) => <th key={t}>{t}</th>)}
                </tr>
              </thead>
            </SpanTable>
            <Fill />
            <HScroll>
              <svg width="5" height="8" viewBox="0 0 5 8"><path d="M5 0v8L0 4z" fill={INK} /></svg>
              <HThumb />
              <svg width="5" height="8" viewBox="0 0 5 8"><path d="M0 0v8l5-4z" fill={INK} /></svg>
            </HScroll>
          </Panel>
        </Main>
      </Work>

      <Status>
        <span>X = 2140 Y = 57902</span>
        <span>层高：  6</span>
        <span>标高：  -0.05~5.95</span>
        <span>0</span>
        <span>隐藏：0</span>
        <Snaps>
          <Snap aria-label="正交"><Icon n="ortho" /></Snap>
          <Snap $wide $on $gap aria-label="捕捉"><Icon n="snapbox" /><Caret s={5} /></Snap>
          <Snap $gap aria-label="交点"><Icon n="cross" dim /></Snap>
          <Snap $wide aria-label="角度"><Icon n="angle" /><Caret s={5} /></Snap>
          <Snap $wide aria-label="偏移"><Icon n="plusminus" /><Caret s={5} /></Snap>
          <Snap aria-label="框选"><Icon n="window" w={1.5} /></Snap>
          <Snap aria-label="折线"><Icon n="polyarc" /></Snap>
        </Snaps>
        <span>{'按鼠标左键选择梁图元，按右键或 ESC 退出；可以通过回车键及 Shift+\\"→←↑\\" 光标键在跨之间、上下输入框之间进行切换'}</span>
      </Status>

      <Taskbar>
        <TaskApp aria-label="开始菜单"><svg width="16" height="16" viewBox="0 0 16 16"><path d="M0 2l7-1v6.500H0zM8 1l8-1v7.500H8zM0 8.500h7V15l-7-1zM8 8.500h8V16l-8-1z" fill="#000" /></svg></TaskApp>
        <TaskApp aria-label="搜索"><svg width="17" height="17" viewBox="0 0 17 17" fill="none" stroke="#111" strokeWidth="1.500"><circle cx="10.500" cy="6" r="5" /><path d="M7 10l-6 6" /></svg></TaskApp>
        <TaskApp $on aria-label="广联达"><svg width="24" height="24" viewBox="0 0 24 24"><rect width="24" height="24" rx="4" fill="#bde6fb" /><path d="M4 5c3 1 13 1 16 0 0 4-3 5-6 5v8c0 3-4 3-4 0v-8c-3 0-6-1-6-5z" fill="#0c86ea" /></svg></TaskApp>
        <TaskApp aria-label="帮助文档"><svg width="18" height="20" viewBox="0 0 18 20"><path d="M1 7h10v12H1z" fill="#fff" stroke="#555" /><path d="M3 10h6M3 13h6M3 16h6" stroke="#444" /><path d="M8 5c0-6 9-5 8 0 0 3-3 3-3 6M13 13v2" stroke="#333" strokeWidth="4" fill="none" /><path d="M8 5c0-6 9-5 8 0 0 3-3 3-3 6M13 13v2" stroke="#f7e600" strokeWidth="2.500" fill="none" /></svg></TaskApp>
        <TaskApp><YuTile>预</YuTile></TaskApp>
        <TaskApp aria-label="文件夹"><svg width="22" height="20" viewBox="0 0 22 20"><path d="M0 1h8l2 3h11v15H0z" fill="#f2b632" /><path d="M0 6h21v13H0z" fill="#ffd75e" /><path d="M4 19v-8h13v8h-4v-4H8v4z" fill="#3c9be8" /></svg></TaskApp>
        <TaskApp aria-label="WPS"><svg width="25" height="20" viewBox="0 0 25 20"><path d="M0 1h7l3 10 3-6 3 6 2-6h-4l2-4h9l-6 18h-5l-2-5-2 5H5z" fill="#e8301c" /></svg></TaskApp>
        <TaskApp aria-label="浏览器"><svg width="24" height="24" viewBox="0 0 24 24"><circle cx="12" cy="12" r="9.500" fill="#fff" stroke="#2a7de0" strokeWidth="5" /><path d="M3 15a9.500 9.500 0 0 1 5-12" stroke="#5cc8f0" strokeWidth="5" fill="none" /><path d="M12 21c0-5 5-6 7-3 4-1 5 3 4 5H13z" fill="#fff" /></svg></TaskApp>
        <TaskApp aria-label="助手"><svg width="24" height="20" viewBox="0 0 24 20"><ellipse cx="12" cy="10" rx="10" ry="9" fill="#f4f4f4" stroke="#b33" /><rect x="4" y="6" width="16" height="10" rx="4" fill="#26405a" /><path d="M7 11l2-2 2 2M13 11l2-2 2 2" stroke="#f5d73c" fill="none" /><path d="M0 8h2v6H0zM22 8h2v6h-2z" fill="#444" /></svg></TaskApp>
        <Tray>
          <TrayItem aria-label="展开"><Icon n="up" s={14} w={1.5} /></TrayItem>
          <TrayItem aria-label="应用"><svg width="15" height="15" viewBox="0 0 15 15" fill="none" strokeWidth="2.500"><path d="M1 14L5 3l3 10" stroke="#2ca5a0" /><circle cx="9.500" cy="5" r="3.500" stroke="#ef7d31" /><path d="M9 9l4 5" stroke="#3b73d1" /></svg></TrayItem>
          <TrayItem aria-label="显卡"><svg width="16" height="16" viewBox="0 0 16 16"><path d="M0 0h16v16H0z" fill="#1b1b1b" /><path d="M2 8c3-4 8-4 11 0-3 4-8 4-11 0zM5 8c2-2 4-2 5 0-1 2-3 2-5 0z" fill="none" stroke="#76c043" strokeWidth="1.200" /></svg></TrayItem>
          <TrayItem aria-label="微信"><svg width="17" height="15" viewBox="0 0 17 15"><ellipse cx="6" cy="5.500" rx="6" ry="5" fill="#27c55c" /><ellipse cx="12" cy="9.500" rx="5" ry="4" fill="#f3f3f3" /></svg></TrayItem>
          <TrayItem aria-label="网络"><svg width="16" height="14" viewBox="0 0 16 14" fill="none" stroke="#111"><path d="M4 3.500h11.500v7H3.500V6M.5.5h4v4h-4zM9 10v3M6 13.500h6" /></svg></TrayItem>
          <TrayItem aria-label="静音"><svg width="15" height="12" viewBox="0 0 15 12" fill="none" stroke="#111"><path d="M1 4h2l3-3v10L3 8H1zM9 4l4 4M13 4L9 8" /></svg></TrayItem>
          <TrayItem>中</TrayItem>
          <TrayItem $w={32} aria-label="输入法"><svg width="16" height="15" viewBox="0 0 16 15"><path d="M2 1l13-1v13L1 15z" fill="#f4511e" /><path d="M12 4c-3-2-7-1-7 1s6 2 6 4-4 3-7 1" stroke="#fff" strokeWidth="2" fill="none" /></svg></TrayItem>
          <Clock>11:43<br />2021/12/22</Clock>
          <TrayItem $w={36} aria-label="通知"><svg width="24" height="22" viewBox="0 0 24 22"><path d="M0 2h16v12H8l-3 3v-3H0z" fill="#111" /><path d="M3 6h10M3 10h10" stroke="#dde" /><circle cx="15" cy="15" r="7" fill="#b9c0c4" stroke="#555" /><text x="12" y="19" fontSize="11" fontFamily={FONT} fill="#000">2</text></svg></TrayItem>
        </Tray>
      </Taskbar>
    </Page>
  );
}
